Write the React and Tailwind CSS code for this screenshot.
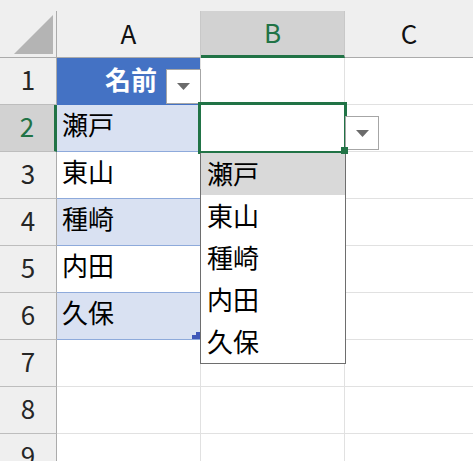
const names = ["瀬戸", "東山", "種崎", "内田", "久保"];

const rows = [
  { n: 1, a: "名前", head: true },
  { n: 2, a: "瀬戸", band: true },
  { n: 3, a: "東山" },
  { n: 4, a: "種崎", band: true },
  { n: 5, a: "内田" },
  { n: 6, a: "久保", band: true },
  { n: 7 },
  { n: 8 },
  { n: 9 },
];

const Caret = () => (
  <svg width="13" height="7" viewBox="0 0 13 7">
    <path d="M0 0h13L6.5 7z" fill="#6b6b6b" />
  </svg>
);

const ArrowButton = ({ className }) => (
  <div className={"absolute flex items-center justify-center bg-white border border-[#a6a6a6] " + className}>
    <Caret />
  </div>
);

const RowHeader = ({ n }) => {
  const selected = n === 2;
  return (
    <div
      className={
        selected
          ? "w-[57px] shrink-0 flex items-center justify-center pb-[4px] bg-[#d2d2d2] border-r-[3px] border-r-[#217346] border-b border-b-[#bdbdbd] text-[#217346]"
          : "w-[57px] shrink-0 flex items-center justify-center pb-[4px] bg-[#efefef] border-r border-r-[#ababab] border-b border-b-[#bdbdbd] text-[#262626]"
      }
    >
      {n}
    </div>
  );
};

const CellA = ({ row }) => {
  if (row.head) {
    return (
      <div className="w-[144px] shrink-0 flex items-center justify-end pr-[43px] pb-[6px] bg-[#4472c4] border-r border-r-[#e1e1e1] text-white font-bold">
        {row.a}
      </div>
    );
  }
  if (row.a) {
    return (
      <div
        className={
          row.band
            ? "w-[144px] shrink-0 flex items-center pl-[5px] pb-[8px] bg-[#d9e1f2] border-r border-r-[#e1e1e1] border-b border-b-[#8eaadb] text-black"
            : "w-[144px] shrink-0 flex items-center pl-[5px] pb-[8px] bg-white border-r border-r-[#e1e1e1] border-b border-b-[#8eaadb] text-black"
        }
      >
        {row.a}
      </div>
    );
  }
  return <div className="w-[144px] shrink-0 bg-white border-r border-b border-[#e1e1e1]" />;
};

export default function App() {
  return (
    <div className="relative w-[473px] h-[461px] overflow-hidden bg-white font-['Noto_Sans_CJK_JP',sans-serif] text-[26px] leading-none">
      <div className="h-[11px] bg-[#efefef]" />

      {/* column headers */}
      <div className="flex h-[47px]">
        <div className="w-[57px] shrink-0 relative bg-[#efefef] border-r border-b border-[#ababab]">
          <svg className="absolute left-[14px] top-[4px]" width="40" height="40" viewBox="0 0 40 40">
            <path d="M39 0V39H0z" fill="#b4b4b4" />
          </svg>
        </div>
        <div className="w-[144px] shrink-0 flex items-center justify-center pb-[2px] bg-[#efefef] border-r border-r-[#c8c8c8] border-b border-b-[#ababab] text-[#111]">
          A
        </div>
        <div className="w-[144px] shrink-0 flex items-center justify-center pb-[2px] bg-[#d2d2d2] border-r border-r-[#c8c8c8] border-b-[3px] border-b-[#217346] text-[#217346]">
          B
        </div>
        <div className="flex-1 flex items-center justify-center pb-[2px] bg-[#efefef] border-b border-b-[#ababab] text-[#111]">
          C
        </div>
      </div>

      {rows.map((row) => (
        <div key={row.n} className="flex h-[47px]">
          <RowHeader n={row.n} />
          <CellA row={row} />
          <div className="w-[144px] shrink-0 bg-white border-r border-b border-[#e1e1e1]" />
          <div className="flex-1 bg-white border-b border-[#e1e1e1]" />
        </div>
      ))}

      {/* filter button on A1 */}
      <ArrowButton className="left-[166px] top-[69px] w-[35px] h-[35px]" />

      {/* table resize handle */}
      <svg className="absolute left-[192px] top-[332px]" width="8" height="7" viewBox="0 0 8 7">
        <path d="M4 0H8V7H0V3H4z" fill="#4058b8" />
      </svg>

      {/* selected cell B2 */}
      <div className="absolute left-[198px] top-[102px] w-[149px] h-[52px] border-[3px] border-[#217346]" />

      {/* validation dropdown */}
      <ArrowButton className="left-[345px] top-[116px] w-[34px] h-[34px]" />
      <div className="absolute left-[200px] top-[153px] w-[146px] h-[211px] bg-white border border-[#6e6e6e] border-t-0">
        {names.map((name, i) => (
          <div
            key={name}
            className={
              i === 0
                ? "h-[42px] flex items-center pl-[6px] pb-[2px] bg-[#d9d9d9] text-black"
                : "h-[42px] flex items-center pl-[6px] pb-[2px] text-black"
            }
          >
            {name}
          </div>
        ))}
      </div>
      <div className="absolute left-[341px] top-[147px] w-[7px] h-[7px] bg-[#217346]" />
    </div>
  );
}
